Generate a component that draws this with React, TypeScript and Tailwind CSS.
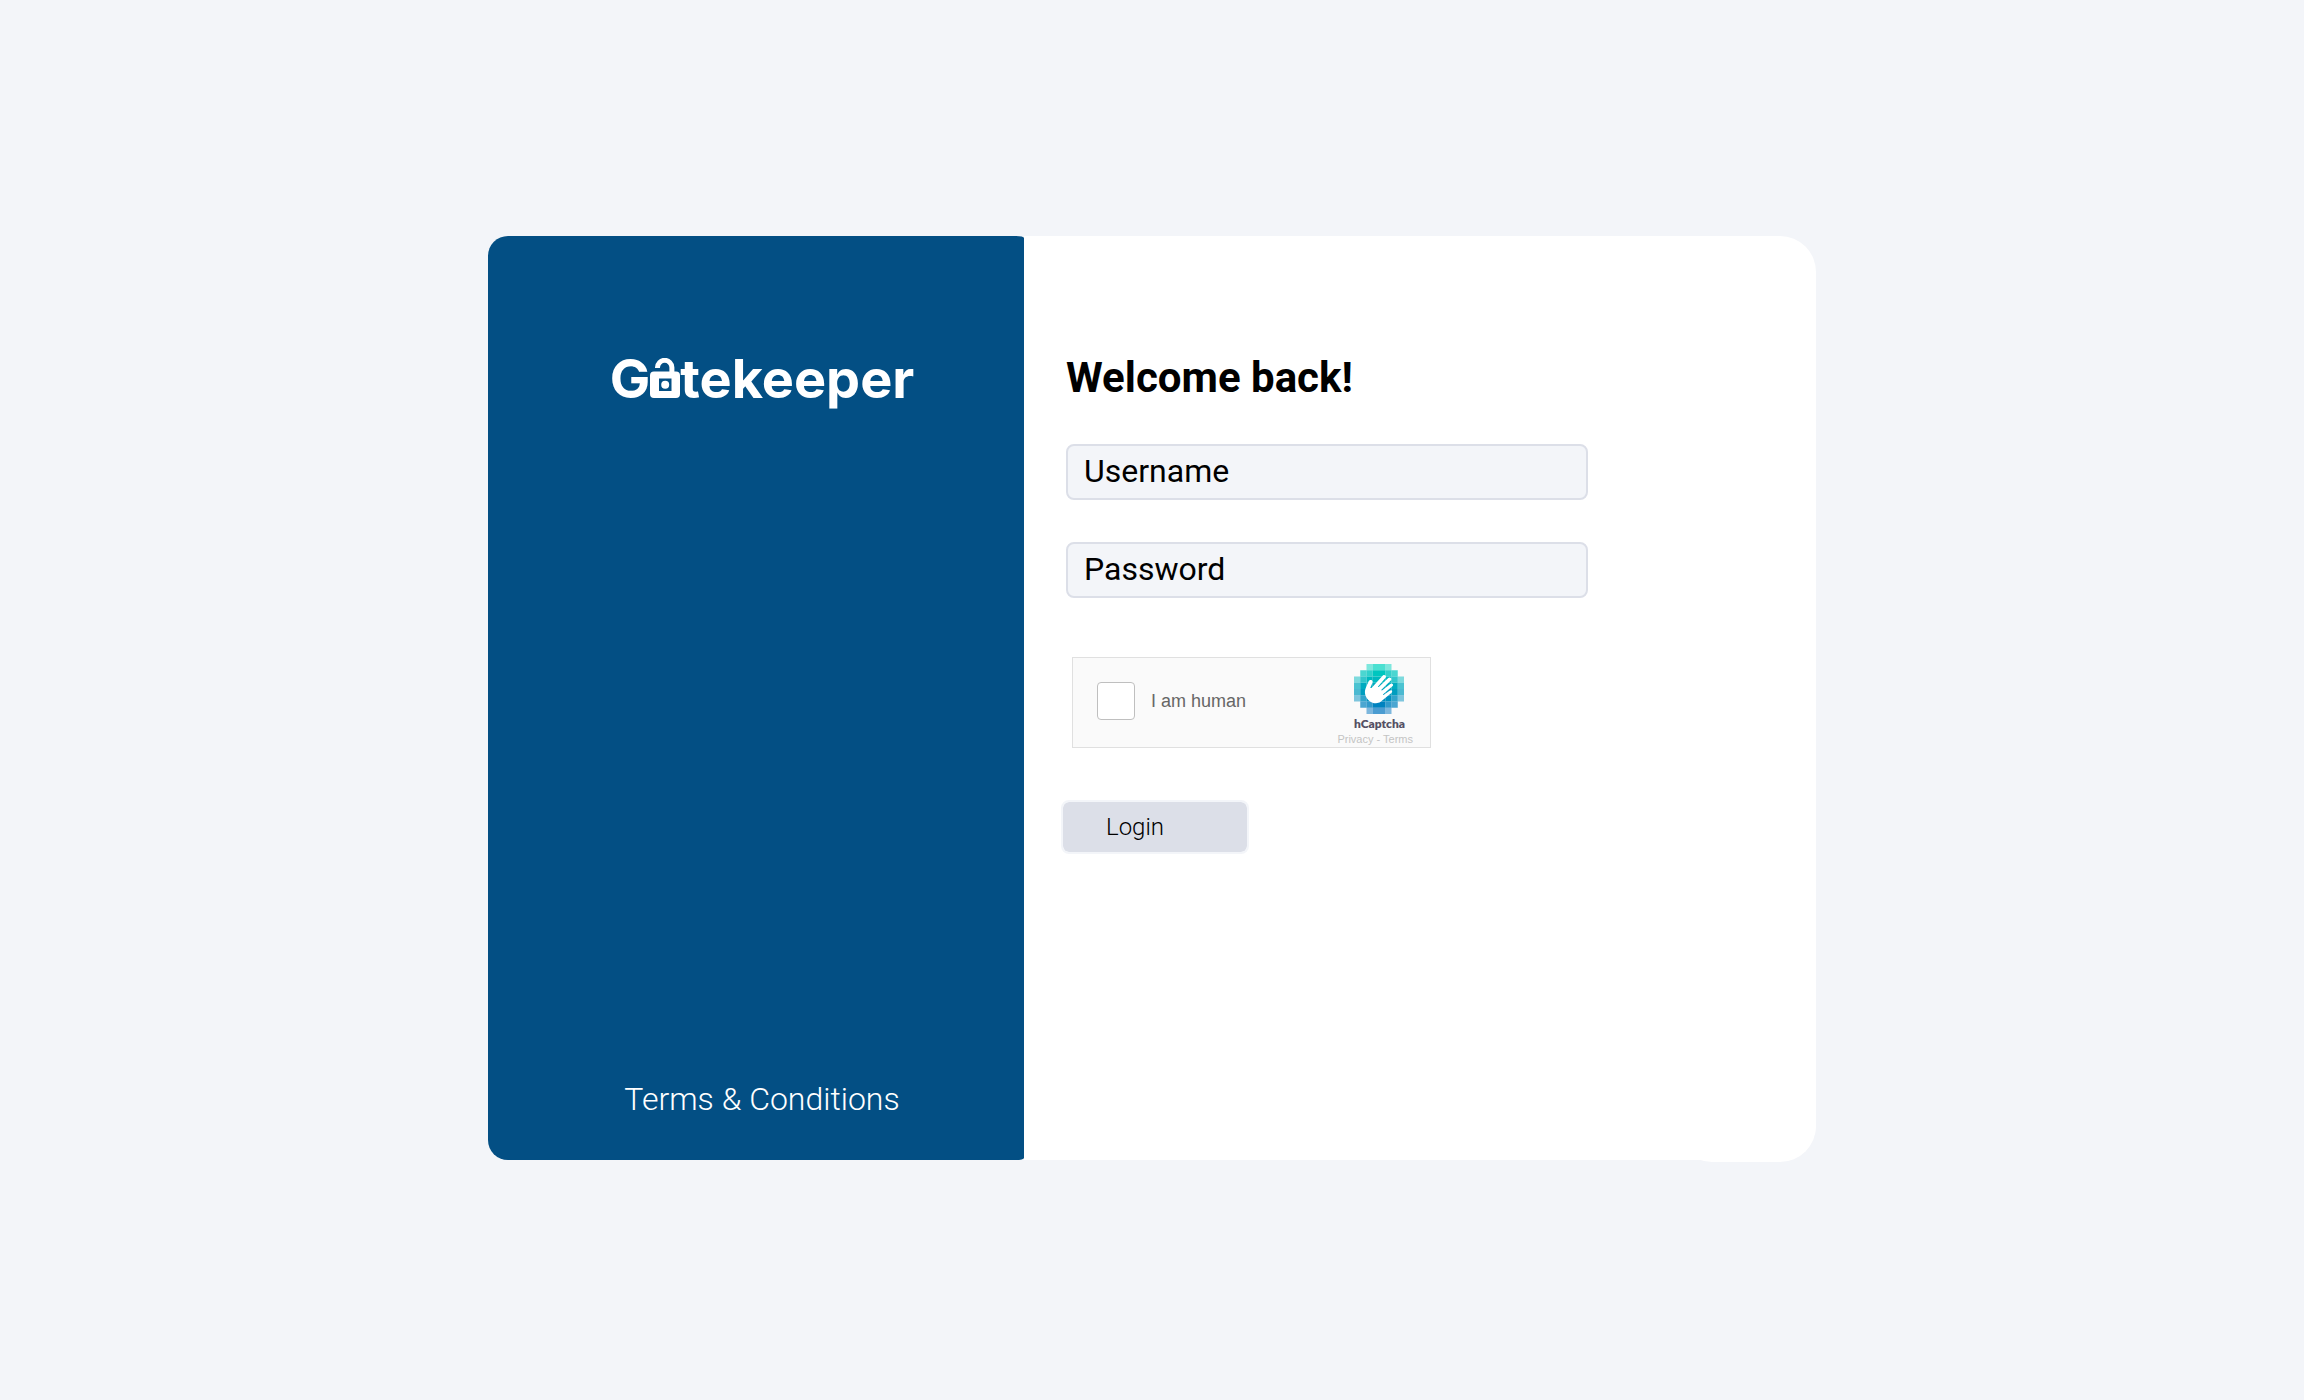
import React from "react";

const ROWS: { color: string; start: number; opacities: number[] }[] = [
  { color: "#00D4BF", start: 2, opacities: [0.5, 0.7, 0.7, 0.5] },
  { color: "#00C6BF", start: 1, opacities: [0.7, 0.8, 1, 1, 0.8, 0.7] },
  { color: "#00B9BF", start: 0, opacities: [0.5, 0.8, 1, 1, 1, 1, 0.8, 0.5] },
  { color: "#00ABBF", start: 0, opacities: [0.7, 1, 1, 1, 1, 1, 1, 0.7] },
  { color: "#009DBF", start: 0, opacities: [0.7, 1, 1, 1, 1, 1, 1, 0.7] },
  { color: "#008FBF", start: 0, opacities: [0.5, 0.8, 1, 1, 1, 1, 0.8, 0.5] },
  { color: "#0082BF", start: 1, opacities: [0.7, 0.8, 1, 1, 0.8, 0.7] },
  { color: "#0074BF", start: 2, opacities: [0.5, 0.7, 0.7, 0.5] },
];

function CaptchaMark() {
  return (
    <svg viewBox="0 0 32 32" className="size-[50px]" aria-hidden="true">
      {ROWS.map((row, y) =>
        row.opacities.map((opacity, i) => (
          <rect
            key={`${y}-${i}`}
            x={(row.start + i) * 4}
            y={y * 4}
            width="4"
            height="4"
            fill={row.color}
            opacity={opacity}
          />
        ))
      )}
      <path
        fill="#fff"
        d="M10.5141 14.9697L11.6379 12.4572C12.0459 11.8129 11.9958 11.0255 11.5449 10.5745C11.4876 10.5173 11.416 10.46 11.3444 10.4171C11.0366 10.2238 10.6572 10.1808 10.3065 10.2954C9.9199 10.4171 9.58349 10.6748 9.36875 11.0184C9.36875 11.0184 7.82969 14.6046 7.26419 16.2153C6.69868 17.8259 6.92058 20.7822 9.12538 22.987C11.4661 25.3276 14.8448 25.8575 17.0066 24.2397C17.0997 24.1967 17.1784 24.1395 17.2572 24.0751L23.9072 18.5202C24.2293 18.2554 24.7089 17.7042 24.2794 17.0743C23.8642 16.4586 23.0697 16.881 22.7404 17.0886L18.9107 19.8731C18.8391 19.9304 18.7318 19.9232 18.6673 19.8517C18.6673 19.8517 18.6673 19.8445 18.6602 19.8445C18.56 19.7228 18.5456 19.4079 18.696 19.2862L24.5657 14.304C25.074 13.8459 25.1456 13.1802 24.7304 12.7292C24.3295 12.2854 23.6924 12.2997 23.1842 12.7578L17.9157 16.881C17.8155 16.9597 17.6652 16.9454 17.5864 16.8452L17.5793 16.838C17.4719 16.7235 17.4361 16.5231 17.5506 16.4014L23.535 10.596C24.0074 10.1522 24.036 9.4149 23.5922 8.94245C23.3775 8.72056 23.084 8.59887 22.7762 8.59887C22.4612 8.59887 22.1606 8.70624 21.9387 8.92813L15.8255 14.6691C15.6823 14.8122 15.396 14.6691 15.3602 14.4973C15.3459 14.4328 15.3674 14.3684 15.4103 14.3255L20.0918 8.99972C20.5571 8.56308 20.5858 7.83293 20.1491 7.36763C19.7124 6.90234 18.9823 6.87371 18.517 7.31036C18.4955 7.32468 18.4812 7.34615 18.4597 7.36763L11.3659 15.2203C11.1082 15.478 10.736 15.4851 10.557 15.342C10.4425 15.2489 10.4282 15.0843 10.5141 14.9697Z"
      />
    </svg>
  );
}

/* Open padlock standing in for the "a" of the wordmark. */
function LockLetter() {
  return (
    <svg viewBox="0 0 30 41" className="h-[41px] w-[30px]" role="img" aria-label="a">
      <path
        d="M7.5 10V9.5a7.2 7.2 0 0 1 14.4 0V15"
        fill="none"
        stroke="#fff"
        strokeWidth="5"
      />
      <path
        fill="#fff"
        fillRule="evenodd"
        d="M4 13.5H26a4 4 0 0 1 4 4V36a4 4 0 0 1-4 4H4a4 4 0 0 1-4-4V17.5a4 4 0 0 1 4-4ZM9 20.5V33H21.500V20.500Z"
      />
      <circle cx="15.200" cy="26.700" r="4" fill="#fff" />
    </svg>
  );
}

function Brand() {
  return (
    <div className="flex items-end font-['Inter',sans-serif] text-[54px] leading-[66px] font-bold text-white">
      <span>G</span>
      <span className="flex pb-[13px]">
        <LockLetter />
      </span>
      <span>tekeeper</span>
    </div>
  );
}

function Field({ label, type }: { label: string; type: string }) {
  return (
    <input
      type={type}
      aria-label={label}
      placeholder={label}
      className="h-14 w-full rounded-lg border-2 border-[#dcdfe8] bg-[#f3f5f9] px-4 pb-0.5 text-[32px] text-black outline-none placeholder:text-black placeholder:opacity-100"
    />
  );
}

function Captcha() {
  return (
    <div className="ml-[11px] flex h-[91px] w-[359px] items-start border border-[#e0e0e0] bg-[#fafafa] pl-6 font-['Liberation_Sans',Arial,sans-serif]">
      <input
        id="human"
        type="checkbox"
        className="mt-6 size-[38px] appearance-none rounded border border-[#bfbfbf] bg-white"
      />
      <label htmlFor="human" className="mt-[29px] ml-4 text-lg text-[#666]">
        I am human
      </label>
      <div className="mr-[17px] ml-auto flex flex-col items-end pt-1.5">
        <div className="mr-2 flex flex-col items-center">
          <CaptchaMark />
          <span className="mt-0.5 font-['Lato',sans-serif] text-[12px] leading-4 font-extrabold text-[#555064]">
            hCaptcha
          </span>
        </div>
        <span className="text-[11px] leading-[14px] text-[#c4c4c4]">
          <a href="#privacy">Privacy</a> - <a href="#terms">Terms</a>
        </span>
      </div>
    </div>
  );
}

export default function App() {
  return (
    <main className="min-h-screen bg-[#f3f5f9] px-6 pt-[236px] pb-[236px] font-['Roboto',sans-serif] text-black">
      <div className="mx-auto grid min-h-[924px] max-w-[1328px] grid-cols-[67fr_99fr]">
        <aside className="flex flex-col items-center justify-between rounded-l-[20px] rounded-tr-[8px_2px] rounded-br-[8px_2px] bg-[#034f84] pt-[110px] pb-[41px] pl-3">
          <Brand />
          <a href="#terms-and-conditions" className="text-[32px] leading-10 font-light text-white">
            Terms &amp; Conditions
          </a>
        </aside>
        <section className="relative rounded-tr-[36px] rounded-br-[36px] bg-white">
          <div className="absolute right-0 -bottom-0.5 h-20 w-[140px] rounded-b-[36px] bg-white" />
          <form className="flex flex-col items-start pt-[117px] pl-[37px]" onSubmit={(e) => e.preventDefault()}>
            <div className="flex w-full max-w-[527px] flex-col gap-[42px] pl-[5px]">
              <h1 className="text-[42px] leading-[49px] font-bold">Welcome back!</h1>
              <Field label="Username" type="text" />
              <Field label="Password" type="password" />
            </div>
            <div className="mt-[59px] mb-[52px]">
              <Captcha />
            </div>
            <button
              type="submit"
              className="h-[54px] w-[188px] rounded-lg border-2 border-[#f3f5f9] bg-[#dcdfe8] bg-clip-padding pl-[43px] text-left text-2xl font-light"
            >
              Login
            </button>
          </form>
        </section>
      </div>
    </main>
  );
}
